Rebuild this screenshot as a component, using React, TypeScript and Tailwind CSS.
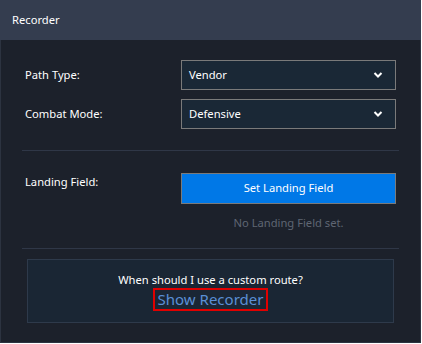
import React from "react";

const Chevron = () => (
  <svg width="10" height="8" viewBox="0 0 10 8" className="shrink-0">
    <path d="M1.5 2 L5 5.5 L8.5 2" stroke="white" strokeWidth="2" fill="none" />
  </svg>
);

const Select = ({ value }: { value: string }) => (
  <div className="flex h-[30px] w-[215px] items-center justify-between border border-[#7a7a7a] bg-[#1a2836] pl-[7px] pr-[12px] text-white">
    <span>{value}</span>
    <Chevron />
  </div>
);

export default function App() {
  return (
    <div
      className="w-[421px] h-[343px] bg-[#1c212b] text-[11.2px] flex flex-col"
      style={{ fontFamily: '"Noto Sans", "Open Sans", sans-serif' }}
    >
      <div className="h-[40px] bg-[#343d4f] flex items-center pl-[12px] text-white">
        Recorder
      </div>
      <div className="flex-1 border-x border-b border-[#2c3340] flex flex-col px-[21px]">
        <div className="flex flex-col gap-[9px] pt-[20px] pb-[21px] border-b border-[#2f3747] px-[3px]">
          <div className="flex items-center justify-between">
            <span className="text-white">Path Type:</span>
            <Select value="Vendor" />
          </div>
          <div className="flex items-center justify-between">
            <span className="text-white">Combat Mode:</span>
            <Select value="Defensive" />
          </div>
        </div>
        <div className="flex justify-between pt-[22px] pb-[16px] border-b border-[#2f3747] px-[3px]">
          <span className="text-white pt-[1px]">Landing Field:</span>
          <div className="flex flex-col items-center w-[215px]">
            <div className="h-[31px] w-full bg-[#0078e7] border border-[#7a7a7a] flex items-center justify-center text-white">
              Set Landing Field
            </div>
            <div className="mt-[11px] text-[#5f6673]">No Landing Field set.</div>
          </div>
        </div>
        <div className="mt-[10px] mx-[5px] h-[64px] bg-[#1a2634] border border-[#2e3a4b] flex flex-col items-center pt-[12px]">
          <div className="text-white leading-[16px]">When should I use a custom route?</div>
          <div className="border-2 border-[#e00000] text-[#5a8fd6] text-[15px] leading-[19px] px-[3px]">
            Show Recorder
          </div>
        </div>
      </div>
    </div>
  );
}
